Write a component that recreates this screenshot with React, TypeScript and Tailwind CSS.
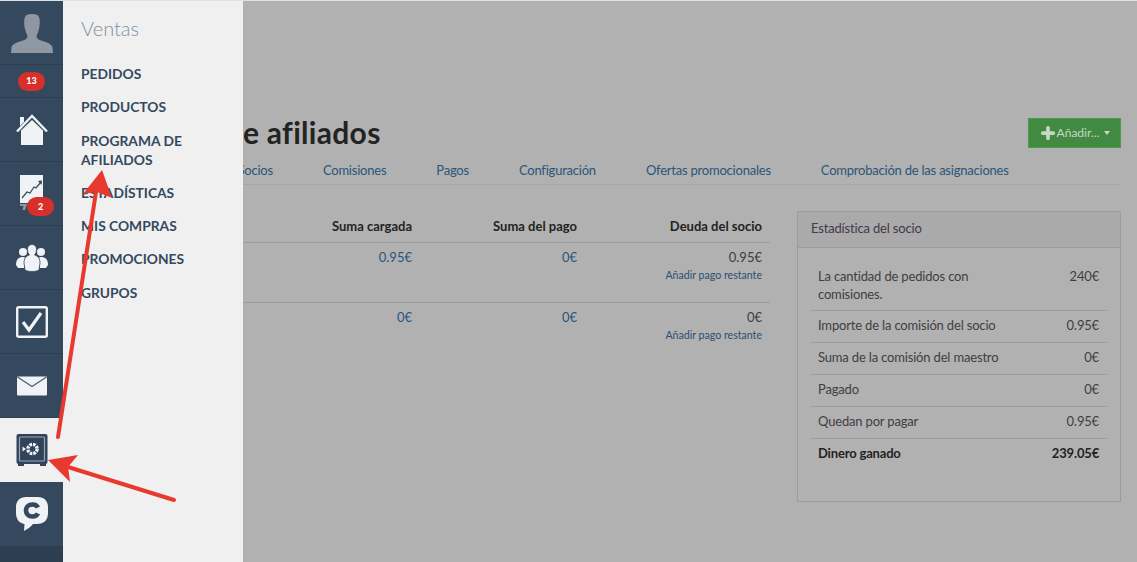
import React from "react";
import { Plus } from "lucide-react";

const font = { fontFamily: "Lato, 'Liberation Sans', sans-serif" };

const AvatarIcon = () => (
  <svg viewBox="0 0 42 40" className="w-[42px] h-[40px]" fill="#8e97a2">
    <path d="M15 2.5 C17 0.5 25 0.5 27 2.5 C29.5 5 29 12 28 16 C27.5 19 26 21 25.5 23 C25.5 25 27 26.5 30 27.5 C35 29 40 30.5 41.5 34 L42 40 L0 40 L0.5 34 C2 30.5 7 29 12 27.5 C15 26.5 16.5 25 16.5 23 C16 21 14.5 19 14 16 C13 12 12.5 5 15 2.5 Z" />
  </svg>
);

const HomeIcon = () => (
  <svg viewBox="0 0 32 32" className="w-8 h-8">
    <path d="M4 3 H8 V8 L4 12 Z" fill="#f0f3f5" />
    <path d="M1 17.5 L16 2 L31 17.5" fill="none" stroke="#f0f3f5" strokeWidth="2.4" />
    <path d="M5 16.5 L16 6 L27 16.5 V31 H5 Z" fill="#f0f3f5" />
  </svg>
);

const ChartIcon = () => (
  <svg viewBox="0 0 32 38" className="w-8 h-[38px]">
    <rect x="4" y="0" width="23" height="28" fill="#f0f3f5" />
    <path d="M6 23 L11 17 L14 18 L18 12 L20 13 L25 7" fill="none" stroke="#34495e" strokeWidth="1.2" />
    <path d="M22 6 L26 5.5 L25.5 10 Z" fill="#34495e" />
    <path d="M4 29 H11 L9 35 H6.5 L7.5 31 H4 Z" fill="#8e97a2" />
  </svg>
);

const GroupIcon = () => (
  <svg viewBox="0 0 32 28" className="w-8 h-7" fill="#f0f3f5">
    <circle cx="7" cy="8" r="4" />
    <circle cx="25" cy="8" r="4" />
    <path d="M0 21 C0 15 3 13 7 13 C9 13 10 14 10 15 L8 24 L2 24 Z" />
    <path d="M32 21 C32 15 29 13 25 13 C23 13 22 14 22 15 L24 24 L30 24 Z" />
    <path d="M11.5 5.5 C11.5 2 13.5 0.5 16 0.5 C18.5 0.5 20.5 2 20.5 5.5 C20.5 8 19.5 10 18.5 11 C22.5 12 24 15 24 19 L23 26 C19 28 13 28 9 26 L8 19 C8 15 9.5 12 13.5 11 C12.5 10 11.5 8 11.5 5.5 Z" stroke="#34495e" strokeWidth="0.8" />
  </svg>
);

const CheckIcon = () => (
  <svg viewBox="0 0 32 32" className="w-8 h-8">
    <rect x="1.2" y="1.2" width="29.6" height="29.6" rx="1.5" fill="#34495e" stroke="#f0f3f5" strokeWidth="2.4" />
    <path d="M7 16 L13 24 L25 7" fill="none" stroke="#f0f3f5" strokeWidth="3.2" />
  </svg>
);

const MailIcon = () => (
  <svg viewBox="0 0 32 20" className="w-8 h-5">
    <rect x="1" y="0.5" width="30" height="19" rx="1" fill="#f0f3f5" />
    <path d="M1.5 1 L16 10.5 L30.5 1" fill="none" stroke="#4d6076" strokeWidth="1.3" />
  </svg>
);

const SafeIcon = () => (
  <svg viewBox="0 0 32 32" className="w-8 h-8">
    <rect x="0.5" y="0" width="31" height="30" rx="2" fill="#2f435a" />
    <rect x="3.5" y="3" width="25" height="24" rx="1" fill="none" stroke="#9aa5b1" strokeWidth="1.2" />
    <rect x="2" y="30" width="6" height="2" fill="#2f435a" />
    <rect x="24" y="30" width="6" height="2" fill="#2f435a" />
    <circle cx="16.5" cy="15" r="4.6" fill="none" stroke="#f0f3f5" strokeWidth="3.4" strokeDasharray="2.6 1" />
    <path d="M6.5 12.5 L10 15 L6.5 17.5 Z" fill="#f0f3f5" />
  </svg>
);

const ChatIcon = () => (
  <svg viewBox="0 0 32 35" className="w-8 h-[35px]">
    <path d="M10 0 H22 C28 0 32 4 32 10 V16 C32 23 28 27 21 27 H17 C15 30 11 32 8 34 L8.5 27 C3 26 0 22 0 16 V10 C0 4 4 0 10 0 Z" fill="#f0f3f5" />
    <path d="M22 10.5 C21 8.5 19 7.5 16.5 7.5 C12.5 7.5 10 10 10 13.5 C10 17 12.5 19.5 16.5 19.5 C19 19.5 21 18.5 22 16.5" fill="none" stroke="#34495e" strokeWidth="4.6" />
  </svg>
);

const SideRow = ({ h, children, active }: { h: string; children?: React.ReactNode; active?: boolean }) => (
  <div className={`${h} relative flex items-center justify-center ${active ? "bg-[#f0f0f0]" : "border-b border-[#2c3e50]"}`}>
    {children}
  </div>
);

const Badge = ({ label, className }: { label: string; className: string }) => (
  <span className={`${className} w-[27px] h-[19px] rounded-full bg-[#d72f2b] text-white text-[9px] font-black flex items-center justify-center`}>
    {label}
  </span>
);

const stats = [
  ["Importe de la comisión del socio", "0.95€"],
  ["Suma de la comisión del maestro", "0€"],
  ["Pagado", "0€"],
  ["Quedan por pagar", "0.95€"],
];

const menu = ["PEDIDOS", "PRODUCTOS", "PROGRAMA DE AFILIADOS", "ESTADÍSTICAS", "MIS COMPRAS", "PROMOCIONES", "GRUPOS"];

const tabs = ["Socios", "Comisiones", "Pagos", "Configuración", "Ofertas promocionales", "Comprobación de las asignaciones"];

const PayRow = ({ charged, debt, last }: { charged: string; debt: string; last?: boolean }) => (
  <div className={`grid grid-cols-[173px_160px_165px_185px] h-[60px] text-[13px] leading-[18px] text-[#2b5578] text-right pt-[5px] ${last ? "" : "border-b border-[#9c9c9c]"}`}>
    <div />
    <div className="pr-2">{charged}</div>
    <div className="pr-2">0€</div>
    <div className="pr-2">
      <div className="text-[#3d3d3d]">{debt}</div>
      <div className="text-[10.6px] text-[#2c4f6e]">Añadir pago restante</div>
    </div>
  </div>
);

export default function App() {
  return (
    <div className="relative flex h-screen overflow-hidden border-t border-[#dde0e5] bg-[#b1b1b1]" style={font}>
      <aside className="w-[63px] shrink-0 bg-[#2c3e50] flex flex-col">
        <div className="bg-[#34495e]">
          <SideRow h="h-[64px]"><AvatarIcon /></SideRow>
          <SideRow h="h-[33px]"><Badge label="13" className="" /></SideRow>
          <SideRow h="h-[64px]"><HomeIcon /></SideRow>
          <SideRow h="h-[64px]">
            <ChartIcon />
            <Badge label="2" className="absolute left-[27px] top-[35px]" />
          </SideRow>
          <SideRow h="h-[64px]"><GroupIcon /></SideRow>
          <SideRow h="h-[64px]"><CheckIcon /></SideRow>
          <SideRow h="h-[64px]"><MailIcon /></SideRow>
          <SideRow h="h-[64px]" active><SafeIcon /></SideRow>
          <div className="h-[64px] flex items-center justify-center"><ChatIcon /></div>
        </div>
      </aside>

      <main className="flex-1 min-w-0 pl-[24px] pr-4 pt-[117px]">
        <div className="flex items-start justify-between h-[30px]">
          <h1 className="text-[30px] leading-[28px] font-bold tracking-[0.3px] text-[#232323] whitespace-nowrap">Programa de afiliados</h1>
          <button className="w-[93px] h-[30px] bg-[#428a42] border border-[#4a9a4a] text-[#c4d8c4] text-[12px] flex items-center justify-center">
            <Plus className="w-[18px] h-[18px]" strokeWidth={5} />
            Añadir...
            <span className="ml-[5px] border-x-[3.5px] border-x-transparent border-t-[4px] border-t-[#c4d8c4]" />
          </button>
        </div>

        <nav className="h-[37px] flex items-end gap-[50px] border-b border-[#a6a6a6] pl-[150.5px] pb-[5px] text-[13px] tracking-[-0.22px] leading-[18px] text-[#2b5578]">
          {tabs.map((t) => (
            <span key={t} className="whitespace-nowrap">{t}</span>
          ))}
        </nav>

        <div className="flex items-start gap-[27px] mt-[26px]">
          <section className="w-[683px] shrink-0">
            <div className="grid grid-cols-[173px_160px_165px_185px] h-[32px] border-b border-[#9c9c9c] text-[13px] font-bold text-[#232323] text-right pt-[6px] leading-[18px]">
              <div />
              <div className="pr-2">Suma cargada</div>
              <div className="pr-2">Suma del pago</div>
              <div className="pr-2">Deuda del socio</div>
            </div>
            <PayRow charged="0.95€" debt="0.95€" />
            <PayRow charged="0€" debt="0€" last />
          </section>

          <section className="w-[324px] h-[291px] shrink-0 border border-[#9c9c9c] text-[13px] tracking-[-0.17px] leading-[18px] text-[#3f3f3f]">
            <div className="h-[36px] bg-[#aaaaaa] border-b border-[#9c9c9c] px-[13px] pb-[3px] flex items-center text-[#43384a]">Estadística del socio</div>
            <div className="px-[13px] pt-[12px]">
              <div className="flex justify-between pl-[7px] pr-[8px] py-[7px] border-b border-[#9c9c9c]">
                <span className="w-[170px]">La cantidad de pedidos con comisiones.</span>
                <span>240€</span>
              </div>
              {stats.map(([k, v]) => (
                <div key={k} className="h-[32px] flex items-center justify-between pl-[7px] pr-[8px] pb-[3px] border-b border-[#9c9c9c]">
                  <span>{k}</span>
                  <span>{v}</span>
                </div>
              ))}
              <div className="h-[32px] flex items-center justify-between pl-[7px] pr-[8px] pb-[4px] font-bold text-[#232323]">
                <span>Dinero ganado</span>
                <span>239.05€</span>
              </div>
            </div>
          </section>
        </div>
      </main>

      {/* flyout covers the left part of the page */}
      <div className="absolute left-[63px] top-0 bottom-0 w-[180px] bg-[#f0f0f0] px-[18px]">
        <div className="text-[20px] leading-[24px] font-light text-[#7f8fa0] pt-[15px]">Ventas</div>
        <ul className="mt-[24px] flex flex-col gap-[14.3px] text-[13.8px] leading-[19px] font-bold text-[#34495e]">
          {menu.map((m) => (
            <li key={m}>{m}</li>
          ))}
        </ul>
      </div>

      {/* annotation arrows */}
      <svg className="absolute left-0 top-[-1px] pointer-events-none" width="1137" height="562">
        <path d="M58 437 L96 192" stroke="#e8392e" strokeWidth="4" strokeLinecap="round" fill="none" />
        <path d="M102 170 L112 198 L97 192 L83 194 Z" fill="#e8392e" />
        <path d="M174 500 L68 467" stroke="#e8392e" strokeWidth="4" strokeLinecap="round" fill="none" />
        <path d="M48 460 L78 455 L68 467 L70 482 Z" fill="#e8392e" />
      </svg>
    </div>
  );
}
